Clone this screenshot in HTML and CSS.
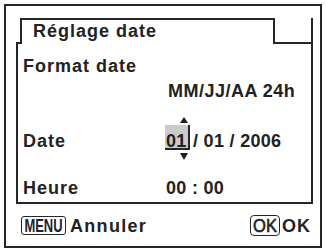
FILE: index.html
```html
<!DOCTYPE html>
<html lang="fr">
<head>
<meta charset="utf-8">
<title>Réglage date</title>
<link rel="stylesheet" href="styles.css">
</head>
<body>
<div class="frame">
  <div class="panel">
    <div class="panel-head">
      <div class="head-lead"></div>
      <div class="tab">Réglage date</div>
      <div class="head-rest"></div>
    </div>
    <div class="panel-body">
      <div class="row row-format">
        <span class="label">Format date</span>
      </div>
      <div class="row row-fmtval">
        <span class="label"></span>
        <span class="value fmt">MM/JJ/AA 24h</span>
      </div>
      <div class="row row-date">
        <span class="label">Date</span>
        <span class="value digits"><span class="cursor">01<span class="arrow-up"></span><span class="arrow-down"></span></span><span class="rest">/ 01 / 2006</span></span>
      </div>
      <div class="row row-time">
        <span class="label">Heure</span>
        <span class="value digits time">00 : 00</span>
      </div>
    </div>
  </div>
  <div class="footer">
    <div class="action">
      <span class="badge badge-menu"><span class="badge-text menu-text">MENU</span></span>
      <span class="action-label cancel">Annuler</span>
    </div>
    <div class="action">
      <span class="badge badge-ok"><span class="badge-text ok-text">OK</span></span>
      <span class="action-label ok">OK</span>
    </div>
  </div>
</div>
</body>
</html>
```
FILE: styles.css
```css
html, body {
  margin: 0;
  padding: 0;
  background: #ffffff;
}
body {
  font-family: "Liberation Sans", Arial, sans-serif;
  font-weight: bold;
  font-size: 18px;
  line-height: 20px;
  color: #222222;
  letter-spacing: 1px;
}
.frame {
  box-sizing: border-box;
  width: 318px;
  height: 244px;
  margin: 4px 0 0 4px;
  border: 2px solid #262626;
  display: flex;
  flex-direction: column;
}
.panel {
  margin: 12px 7px 0 10px;
}
.panel-head {
  display: flex;
}
.head-lead {
  width: 4px;
  border-bottom: 2px solid #262626;
}
.tab {
  box-sizing: border-box;
  width: 255px;
  height: 26px;
  border: 2px solid #262626;
  border-bottom: none;
  padding: 1px 0 3px 11px;
}
.head-rest {
  flex: 1;
  border-bottom: 2px solid #262626;
  border-right: 2px solid #262626;
}
.panel-body {
  border: 2px solid #262626;
  border-top: none;
  padding: 12px 0 4px 5px;
  display: flex;
  flex-direction: column;
}
.row {
  display: grid;
  grid-template-columns: 142px 1fr;
  height: 20px;
}
.row-fmtval { margin-top: 5px; }
.row-date { margin-top: 30px; }
.row-time { margin-top: 27px; }
.value.fmt {
  margin-left: 3px;
  letter-spacing: 0.5px;
}
.digits {
  letter-spacing: 0.3px;
  white-space: pre;
}
.time { padding-left: 1px; }
.cursor {
  position: relative;
  display: inline-block;
  vertical-align: baseline;
  width: 22px;
  height: 17px;
  padding: 6px 0 0 1px;
  margin-top: -6px;
  background: #cbcbcb;
  border-right: 2px solid #262626;
  border-bottom: 2px solid #262626;
}
.arrow-up {
  position: absolute;
  left: 15px;
  top: -8px;
  width: 0;
  height: 0;
  border-left: 4px solid transparent;
  border-right: 4px solid transparent;
  border-bottom: 6px solid #1c1c1c;
}
.arrow-down {
  position: absolute;
  left: 15px;
  top: 28px;
  width: 0;
  height: 0;
  border-left: 4px solid transparent;
  border-right: 4px solid transparent;
  border-top: 7px solid #1c1c1c;
}
.rest {
  margin-left: 3px;
}
.footer {
  flex: 1;
  display: flex;
  justify-content: space-between;
  align-items: center;
  padding: 1px 9px 0 15px;
}
.action {
  display: flex;
  align-items: center;
}
.badge {
  box-sizing: border-box;
  display: flex;
  justify-content: center;
  align-items: center;
  border: 1.5px solid #262626;
  border-radius: 3px;
  overflow: visible;
}
.badge-menu {
  width: 45px;
  height: 19px;
}
.badge-ok {
  width: 30px;
  height: 21px;
  border-radius: 4px;
}
.badge-text {
  display: inline-block;
  font-size: 18px;
  line-height: 18px;
  letter-spacing: 0;
  white-space: nowrap;
}
.menu-text {
  transform: scaleX(0.72);
  color: #1d2230;
}
.ok-text {
  font-weight: normal;
  -webkit-text-stroke: 0.6px #222222;
  transform: scaleX(0.92);
}
.action-label.cancel {
  margin-left: 4px;
  letter-spacing: 1.3px;
}
.action-label.ok {
  margin-left: 2px;
}
```
